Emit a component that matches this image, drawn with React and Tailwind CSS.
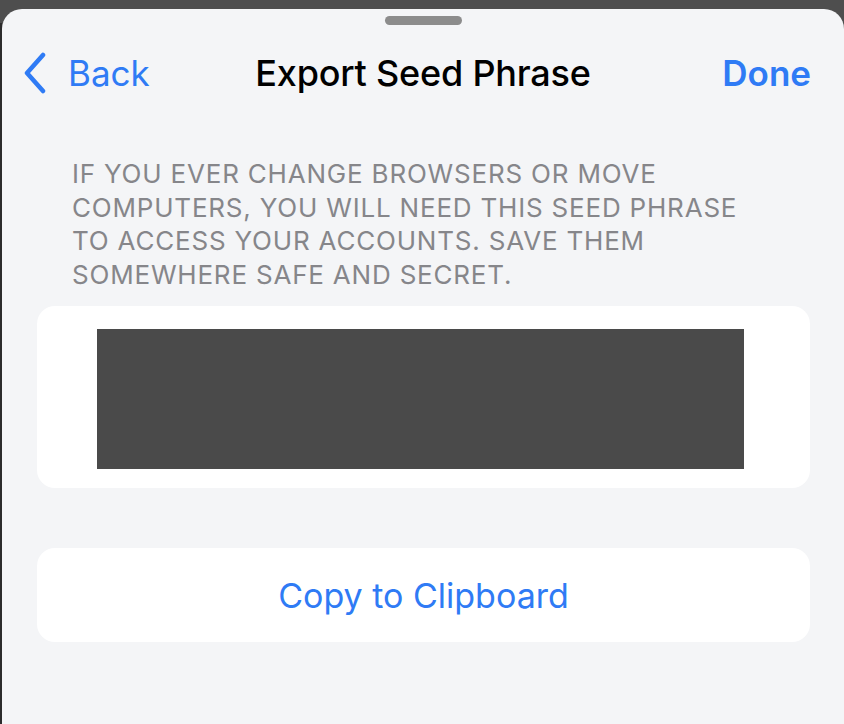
import React from 'react';

const ChevronLeft = () => (
  <svg width="26" height="42" viewBox="0 0 26 42" fill="none">
    <path d="M21 3 L5 21 L21 39" stroke="#2f7bf5" strokeWidth="4.5" strokeLinecap="round" strokeLinejoin="round" />
  </svg>
);

const App = () => {
  return (
    <div className="w-[844px] h-[724px] bg-[#4e4e4e] pt-[9px] flex overflow-hidden" style={{ fontFamily: 'Inter, "Noto Sans", sans-serif' }}>
      <div className="w-[2px] bg-[#2c2c2c] mt-[14px]" />
      {/* Sheet */}
      <div className="flex-1 bg-[#f4f5f7] rounded-t-[20px] flex flex-col">
        {/* Grabber */}
        <div className="flex justify-center pt-[7px]">
          <div className="w-[77px] h-[9px] rounded-full bg-[#8c8c8c]" />
        </div>

        {/* Nav bar */}
        <div className="h-[60px] mt-[18px] grid grid-cols-[1fr_auto_1fr] items-center px-[33px]">
          <button className="-ml-[13px] flex items-center gap-[20px] text-[#2f7bf5] text-[35px] leading-none justify-self-start">
            <ChevronLeft />
            <span>Back</span>
          </button>
          <h1 className="text-[36px] font-medium text-black leading-none tracking-[-0.2px]">Export Seed Phrase</h1>
          <button className="text-[#2f7bf5] text-[35px] font-semibold leading-none justify-self-end">Done</button>
        </div>

        {/* Description */}
        <p className="mt-[54px] px-[70px] text-[26px] leading-[33.5px] uppercase text-[#86868a] tracking-[0.8px]">
          If you ever change browsers or move<br />
          computers, you will need this seed phrase<br />
          to access your accounts. Save them<br />
          somewhere safe and secret.
        </p>

        {/* Seed card */}
        <div className="mt-[15px] ml-[35px] mr-[34px] bg-white rounded-[18px] pt-[23px] pb-[19px] pl-[60px] pr-[66px]">
          <div className="h-[140px] bg-[#4a4a4a]" />
        </div>

        {/* Copy button */}
        <button className="mt-[60px] ml-[35px] mr-[34px] h-[94px] bg-white rounded-[18px] flex items-center justify-center text-[#2f7bf5] text-[34px]">
          Copy to Clipboard
        </button>
      </div>
    </div>
  );
};

export default App;
